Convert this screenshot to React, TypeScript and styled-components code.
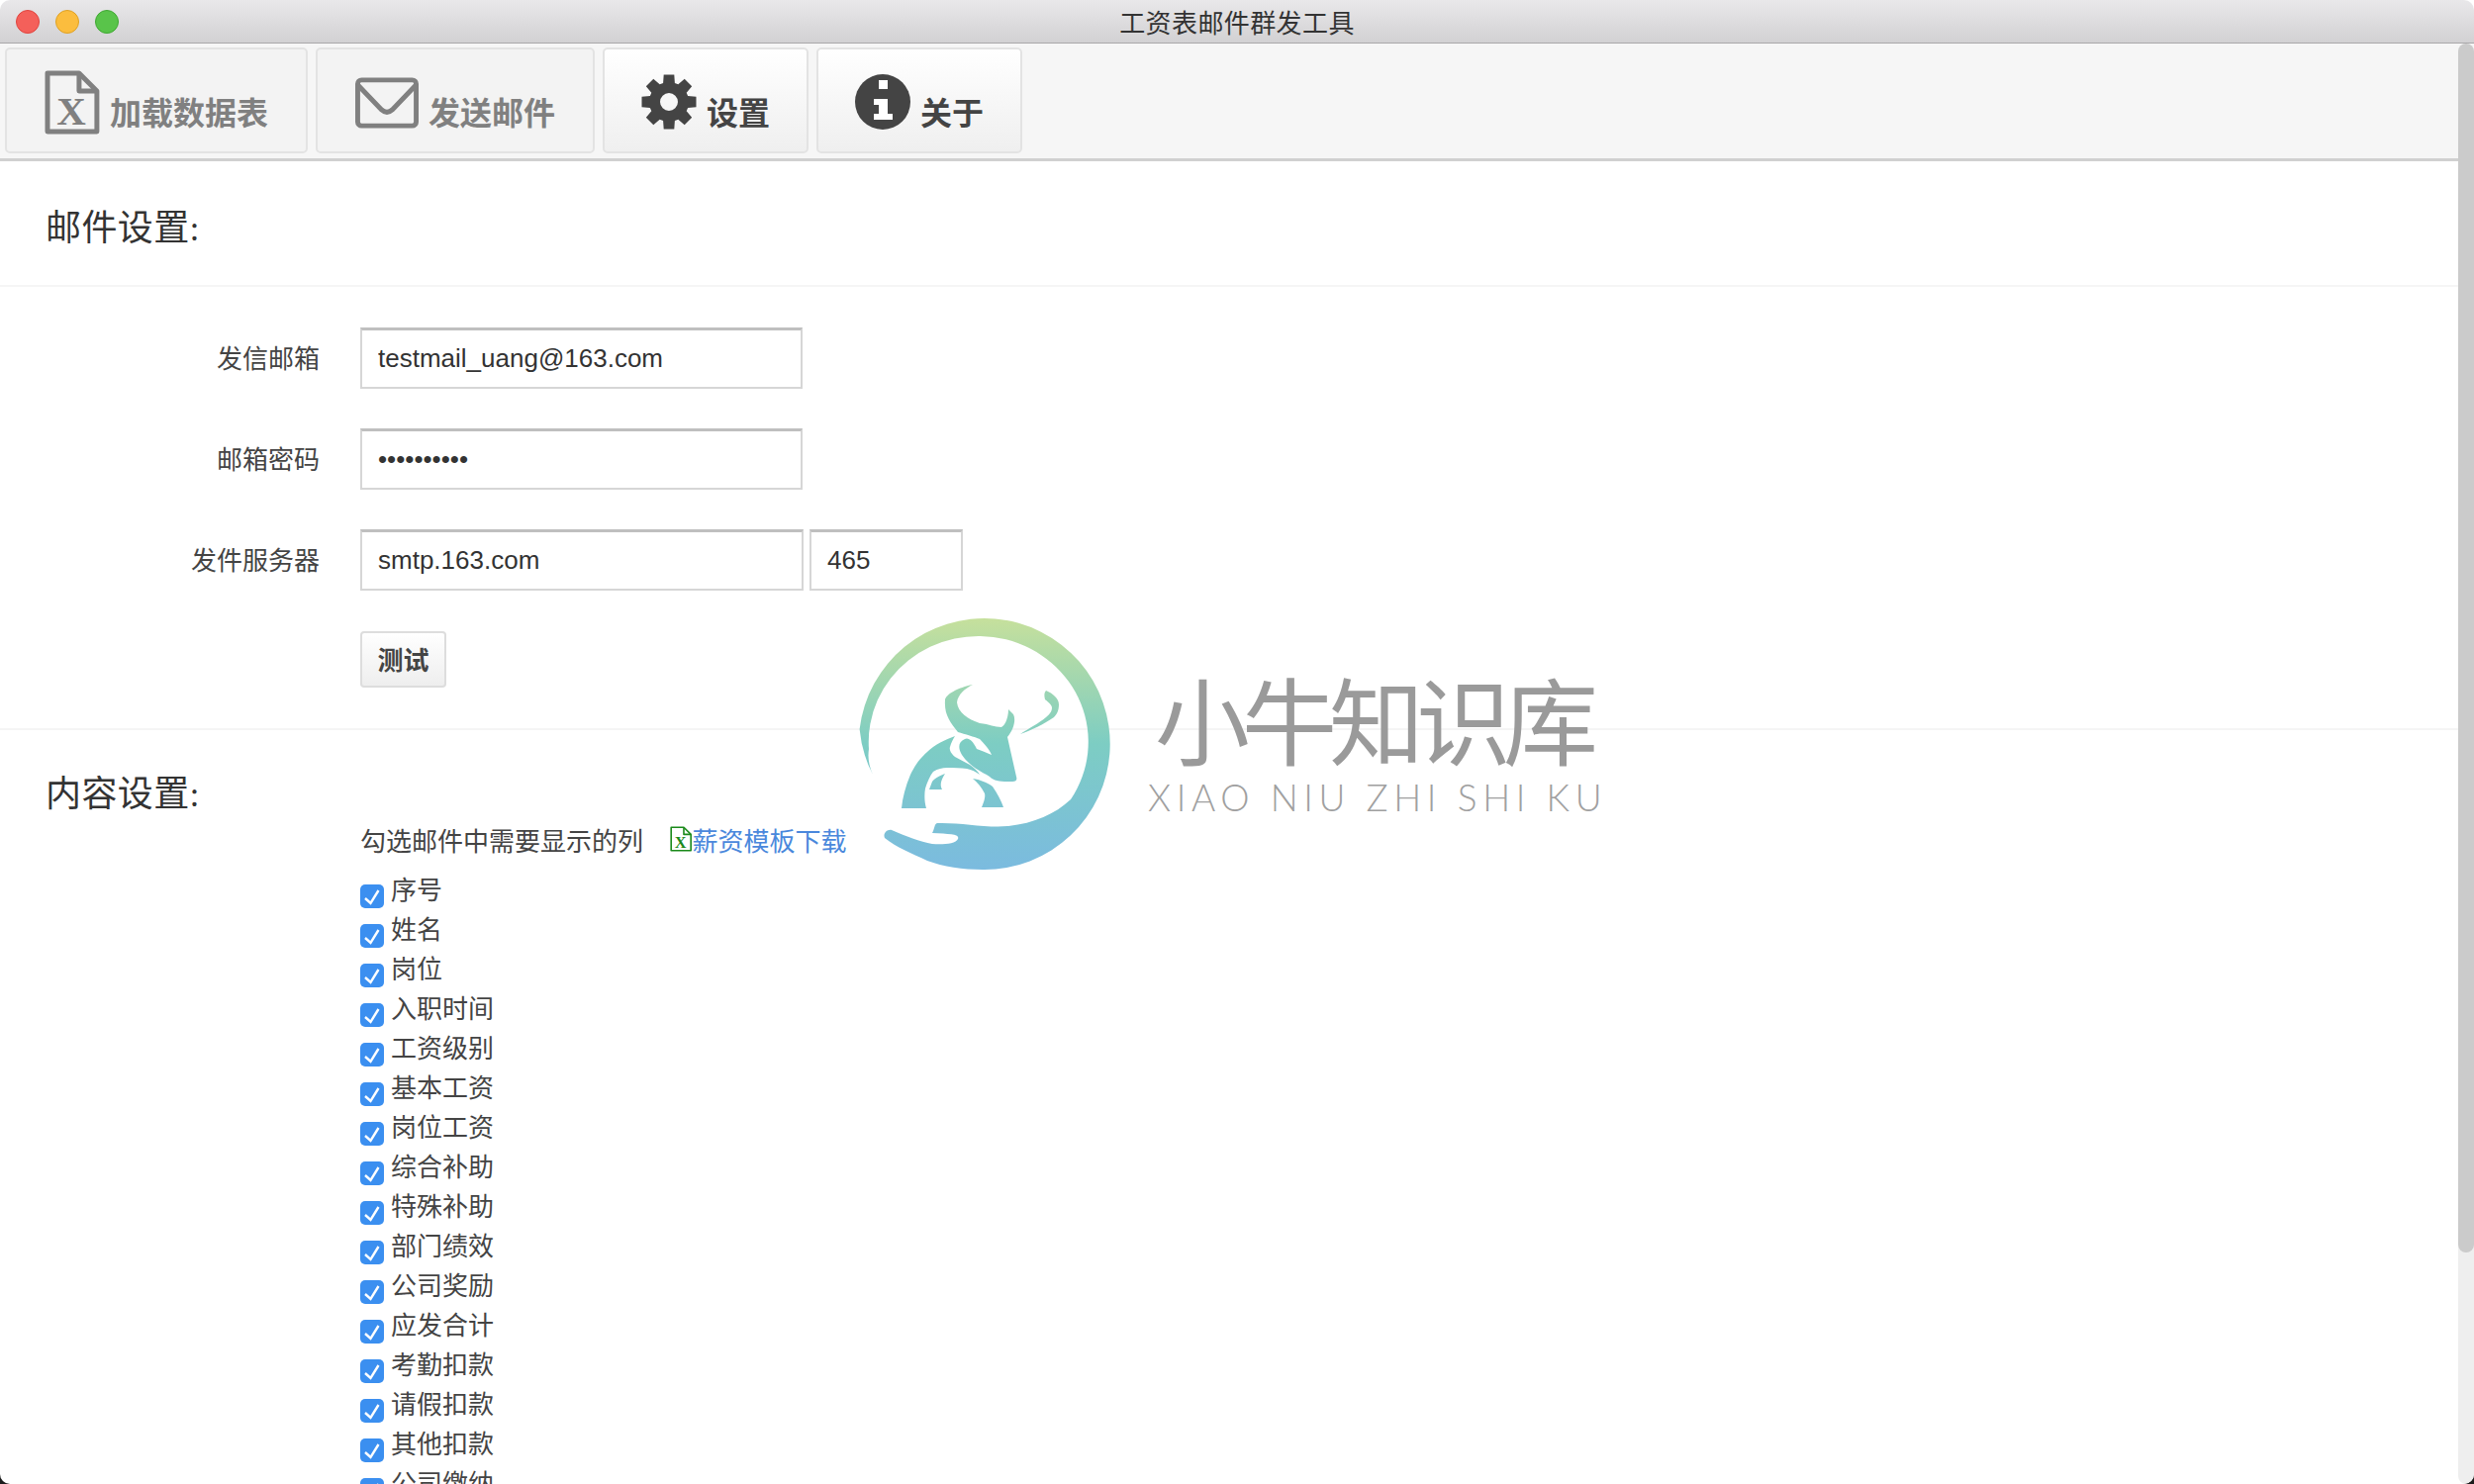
import React from 'react';
import styled, { createGlobalStyle } from 'styled-components';

const SANS = `'Liberation Sans', 'Noto Sans CJK SC', sans-serif`;
const SERIF = `'Liberation Serif', 'Noto Sans CJK SC', serif`;

const GlobalStyle = createGlobalStyle`
  html, body {
    margin: 0;
    padding: 0;
    height: 100%;
    overflow: hidden;
    background: linear-gradient(#ffffff 50%, #1c1c1c 50%);
  }
  * {
    box-sizing: border-box;
  }
`;

const Window = styled.div`
  position: relative;
  width: 2500px;
  height: 1500px;
  display: flex;
  flex-direction: column;
  background: #ffffff;
  border-radius: 10px;
  overflow: hidden;
`;

const TitleBar = styled.div`
  position: relative;
  flex: 0 0 44px;
  display: flex;
  align-items: center;
  justify-content: center;
  background: linear-gradient(#e9e8ea, #d2d1d3);
  border-bottom: 1px solid #a9a8aa;
  font-family: ${SANS};
  font-size: 26px;
  letter-spacing: 0.4px;
  color: #333333;
`;

const Lights = styled.div`
  position: absolute;
  left: 16px;
  top: 10px;
  display: flex;
  gap: 16px;
`;

const Light = styled.span<{ $fill: string; $edge: string }>`
  width: 24px;
  height: 24px;
  border-radius: 50%;
  background: ${props => props.$fill};
  border: 1px solid ${props => props.$edge};
`;

const Scroller = styled.div`
  flex: 1;
  overflow: hidden;
`;

const ScrollTrack = styled.div`
  position: absolute;
  top: 44px;
  right: 0;
  bottom: 0;
  width: 16px;
  background: #eeeeee;
  border-radius: 8px;
`;

const ScrollThumb = styled.div`
  height: 1222px;
  background: #cbcbcb;
  border-radius: 8px;
`;

const Toolbar = styled.div`
  display: flex;
  gap: 8px;
  height: 119px;
  padding: 4px 5px 0;
  background: #f6f6f6;
  border-bottom: 3px solid #d0d0d0;
`;

const ToolButton = styled.button<{ $disabled?: boolean; $pad: number }>`
  display: flex;
  align-items: flex-end;
  gap: 10px;
  height: 107px;
  padding: 0 ${props => props.$pad}px 18px;
  border: 2px solid #e3e3e3;
  border-radius: 5px;
  background: ${props => (props.$disabled ? '#f3f3f3' : 'linear-gradient(#ffffff, #efefef)')};
  color: ${props => (props.$disabled ? '#808080' : '#444444')};
  font-family: ${SANS};
  font-size: 32px;
  font-weight: 700;
  line-height: 40px;
`;

const IconSlot = styled.span<{ $lift: number }>`
  display: block;
  line-height: 0;
  margin-bottom: ${props => props.$lift}px;
`;

const Section = styled.section<{ $height: number }>`
  height: ${props => props.$height}px;
  border-bottom: 2px solid #f5f5f5;
`;

const Heading = styled.h2`
  margin: 0;
  font-family: ${SERIF};
  font-size: 36px;
  font-weight: 400;
  line-height: 50px;
  letter-spacing: 0.4px;
  color: #333333;
`;

const HeadingBar = styled.div`
  padding: 43px 46px 0;
  height: 127px;
  border-bottom: 2px solid #f5f5f5;
`;

const Form = styled.div`
  display: flex;
  flex-direction: column;
  gap: 40px;
  padding-top: 41px;
`;

const FormRow = styled.div`
  display: flex;
  align-items: center;
  gap: 6px;
`;

const FieldLabel = styled.label`
  width: 323px;
  margin: -3px 35px 0 0;
  text-align: right;
  font-family: ${SANS};
  font-size: 26px;
  color: #444444;
`;

const Input = styled.input<{ $width: number }>`
  width: ${props => props.$width}px;
  height: 62px;
  padding: 0 16px;
  border: 2px solid #d6d6d6;
  border-top-width: 3px;
  border-top-color: #bfbfbf;
  outline: none;
  background: #ffffff;
  font-family: ${SANS};
  font-size: 26px;
  color: #333333;
`;

const TestButton = styled.button`
  width: 87px;
  height: 57px;
  padding: 0 0 2px;
  border: 2px solid #dddddd;
  border-radius: 4px;
  background: linear-gradient(#ffffff, #eeeeee);
  font-family: ${SANS};
  font-size: 26px;
  font-weight: 700;
  color: #444444;
`;

const ButtonRow = styled.div`
  padding: 1px 0 0 364px;
`;

const ContentArea = styled.div`
  padding: 40px 0 0 46px;
`;

const ColumnsBlock = styled.div`
  padding-left: 318px;
`;

const HintRow = styled.div`
  display: flex;
  align-items: center;
  height: 40px;
  font-family: ${SERIF};
  font-size: 26px;
  color: #444444;
`;

const TemplateLink = styled.a`
  display: flex;
  align-items: center;
  margin-left: 27px;
  color: #4a88dc;
  text-decoration: none;
`;

const CheckList = styled.ul`
  list-style: none;
  margin: 20px 0 0;
  padding: 0;
`;

const CheckItem = styled.li`
  display: flex;
  align-items: flex-start;
  gap: 7px;
  height: 40px;
  font-family: ${SERIF};
  font-size: 26px;
  line-height: 26px;
  color: #444444;
`;

const CheckBox = styled.span`
  flex: 0 0 24px;
  width: 24px;
  height: 24px;
  margin-top: 6px;
  border-radius: 5px;
  background: #3b8ff0;
  line-height: 0;
`;

const Watermark = styled.div`
  position: absolute;
  left: 868px;
  top: 625px;
  display: flex;
  gap: 40px;
  pointer-events: none;
`;

const WatermarkText = styled.div`
  display: flex;
  flex-direction: column;
  padding-top: 44px;
`;

const WatermarkTitle = styled.div`
  margin-left: 3px;
  font-family: 'Noto Sans CJK SC', sans-serif;
  font-size: 96px;
  font-weight: 400;
  line-height: 112px;
  letter-spacing: -8px;
  color: #9a9a9a;
`;

const WatermarkSub = styled.div`
  margin: 5px 0 0 -4px;
  font-family: 'Lato', sans-serif;
  font-weight: 300;
  font-size: 37px;
  line-height: 40px;
  letter-spacing: 5.6px;
  white-space: nowrap;
  color: #a0a0a0;
`;

const FileIcon = ({ size, color, stroke }: { size: number; color: string; stroke: number }) => (
  <svg width={size * 0.86} height={size} viewBox="0 0 56 65">
    <path
      d="M3 3H35L53 21V62H3Z"
      fill="none"
      stroke={color}
      strokeWidth={stroke}
      strokeLinejoin="round"
    />
    <path d="M35 3V21H53" fill="none" stroke={color} strokeWidth={stroke} strokeLinejoin="round" />
    <text
      x="27"
      y="55"
      textAnchor="middle"
      fontFamily="'Liberation Serif', serif"
      fontWeight="700"
      fontSize="41"
      fill={color}
    >
      X
    </text>
  </svg>
);

const EnvelopeIcon = () => (
  <svg width="64" height="52" viewBox="0 0 65 52">
    <rect x="2.5" y="2.5" width="60" height="47" rx="4" fill="none" stroke="#808080" strokeWidth="5" />
    <path d="M3 8L27 33Q32.500 38 38 33L62 8" fill="none" stroke="#808080" strokeWidth="5" />
  </svg>
);

// eight tooth cog, outline worked out from the tooth angles
const cogPath = () => {
  const pts: string[] = [];
  for (let i = 0; i < 8; i++) {
    const a = (i * Math.PI) / 4 - Math.PI / 2;
    const at = (r: number, off: number) =>
      `${(28 + r * Math.cos(a + off)).toFixed(2)} ${(28 + r * Math.sin(a + off)).toFixed(2)}`;
    pts.push(at(20, -0.3), at(28, -0.19), at(28, 0.19), at(20, 0.3));
  }
  return `M${pts.join('L')}Z`;
};

const CogIcon = () => (
  <svg width="56" height="56" viewBox="0 0 56 56">
    <path
      d={`${cogPath()}M28 19a9 9 0 1 0 0 18a9 9 0 1 0 0-18Z`}
      fill="#444444"
      fillRule="evenodd"
    />
  </svg>
);

const InfoIcon = () => (
  <svg width="56" height="56" viewBox="0 0 56 56">
    <circle cx="28" cy="28" r="28" fill="#444444" />
    <path d="M24 6H33V15H24ZM19 25H33V40H38V46H19V40H24V31H19Z" fill="#ffffff" />
  </svg>
);

const CheckMark = () => (
  <svg width="24" height="24" viewBox="0 0 24 24">
    <path d="M5 14L10.500 19L18.500 6" fill="none" stroke="#ffffff" strokeWidth="2.400" />
  </svg>
);

const Logo = () => (
  <svg width="256" height="256" viewBox="868 625 256 256">
    <defs>
      <linearGradient id="logoFill" gradientUnits="userSpaceOnUse" x1="0" y1="625" x2="0" y2="878">
        <stop offset="0" stopColor="#c6e09c" />
        <stop offset="0.5" stopColor="#7dcdc3" />
        <stop offset="1" stopColor="#7bbbdf" />
      </linearGradient>
    </defs>
    <g fill="url(#logoFill)">
      <path d="M882 783Q871 762 868.600 737A127 127 0 1 1 993 879C973 879 953 876 937 870C922 863 905 856 894 847C892 843 896 838 901 839C915 845 930 851 942 853C952 854 966 853 968 848C970 843 960 843 942 842C945 836 944 833 947 832C970 831 995 837 1019 835C1045 832 1066 823 1082 808A111 107 0 1 0 878 757Q876 770 882 783Z" />
      <path d="M983 692C968 695 955 702 955 708C954 722 960 730 968 740C975 742 985 745 990 747C995 752 1000 758 1002 763C995 760 990 758 987 757C983 748 978 745 975 747C968 750 968 756 972 763C980 775 992 780 1000 785C1005 790 1012 790 1023 790C1027 790 1028 788 1027 785L1018 745C1024 738 1027 728 1024 722L1019 717C1019 725 1016 733 1012 735C1005 735 1000 732 990 731C978 727 968 720 967 710C968 702 975 696 983 692Z" />
      <path d="M965 744C955 748 945 752 937 760C928 768 924 775 920 783C915 795 912 806 911 817L936 817C934 810 934 803 935 797C937 790 940 784 943 780C948 777 952 776 957 776C964 776 971 776 977 777C982 778 986 780 990 783C988 779 984 776 980 773C975 770 970 768 965 765C961 762 959 758 960 755C961 751 963 747 965 744Z" />
      <path d="M955 782C948 785 944 787 942 790L939 798H952C950 794 950 790 955 782Z" />
      <path d="M983 787C990 788 998 791 1003 795C1008 802 1012 810 1014 816H992C994 811 996 806 995 802C992 796 988 791 983 787Z" />
      <path d="M1057 698C1064 701 1070 706 1070 712C1070 718 1068 722 1065 725C1055 732 1042 738 1031 742C1040 736 1050 731 1057 725C1062 721 1063 718 1063 715C1062 711 1057 708 1056 707C1055 703 1055 700 1057 698Z" />
    </g>
  </svg>
);

const COLUMNS = [
  '序号', '姓名', '岗位', '入职时间', '工资级别', '基本工资', '岗位工资', '综合补助',
  '特殊补助', '部门绩效', '公司奖励', '应发合计', '考勤扣款', '请假扣款', '其他扣款', '公司缴纳',
];

const App: React.FC = () => {
  return (
    <Window>
      <GlobalStyle />
      <TitleBar>
        <Lights>
          <Light $fill="#f4605a" $edge="#e0443e" />
          <Light $fill="#fbbd3e" $edge="#dea123" />
          <Light $fill="#59c44a" $edge="#3fa832" />
        </Lights>
        工资表邮件群发工具
      </TitleBar>
      <Scroller>
        <Toolbar>
          <ToolButton $disabled $pad={38}>
            <IconSlot $lift={-1}>
              <FileIcon size={65} color="#808080" stroke={5} />
            </IconSlot>
            加载数据表
          </ToolButton>
          <ToolButton $disabled $pad={38}>
            <IconSlot $lift={5}>
              <EnvelopeIcon />
            </IconSlot>
            发送邮件
          </ToolButton>
          <ToolButton $pad={37}>
            <IconSlot $lift={4}>
              <CogIcon />
            </IconSlot>
            设置
          </ToolButton>
          <ToolButton $pad={37}>
            <IconSlot $lift={4}>
              <InfoIcon />
            </IconSlot>
            关于
          </ToolButton>
        </Toolbar>
        <HeadingBar>
          <Heading>邮件设置:</Heading>
        </HeadingBar>
        <Section $height={448}>
          <Form>
            <FormRow>
              <FieldLabel>发信邮箱</FieldLabel>
              <Input $width={447} defaultValue="testmail_uang@163.com" />
            </FormRow>
            <FormRow>
              <FieldLabel>邮箱密码</FieldLabel>
              <Input $width={447} type="password" defaultValue="1234567890" />
            </FormRow>
            <FormRow>
              <FieldLabel>发件服务器</FieldLabel>
              <Input $width={448} defaultValue="smtp.163.com" />
              <Input $width={155} defaultValue="465" />
            </FormRow>
            <ButtonRow>
              <TestButton>测试</TestButton>
            </ButtonRow>
          </Form>
        </Section>
        <ContentArea>
          <Heading>内容设置:</Heading>
          <ColumnsBlock>
            <HintRow>
              勾选邮件中需要显示的列
              <TemplateLink href="#">
                <FileIcon size={26} color="#1b8a1b" stroke={4} />
                薪资模板下载
              </TemplateLink>
            </HintRow>
            <CheckList>
              {COLUMNS.map(name => (
                <CheckItem key={name}>
                  <CheckBox>
                    <CheckMark />
                  </CheckBox>
                  {name}
                </CheckItem>
              ))}
            </CheckList>
          </ColumnsBlock>
        </ContentArea>
      </Scroller>
      <ScrollTrack>
        <ScrollThumb />
      </ScrollTrack>
      <Watermark>
        <Logo />
        <WatermarkText>
          <WatermarkTitle>小牛知识库</WatermarkTitle>
          <WatermarkSub>XIAO NIU ZHI SHI KU</WatermarkSub>
        </WatermarkText>
      </Watermark>
    </Window>
  );
};

export default App;
